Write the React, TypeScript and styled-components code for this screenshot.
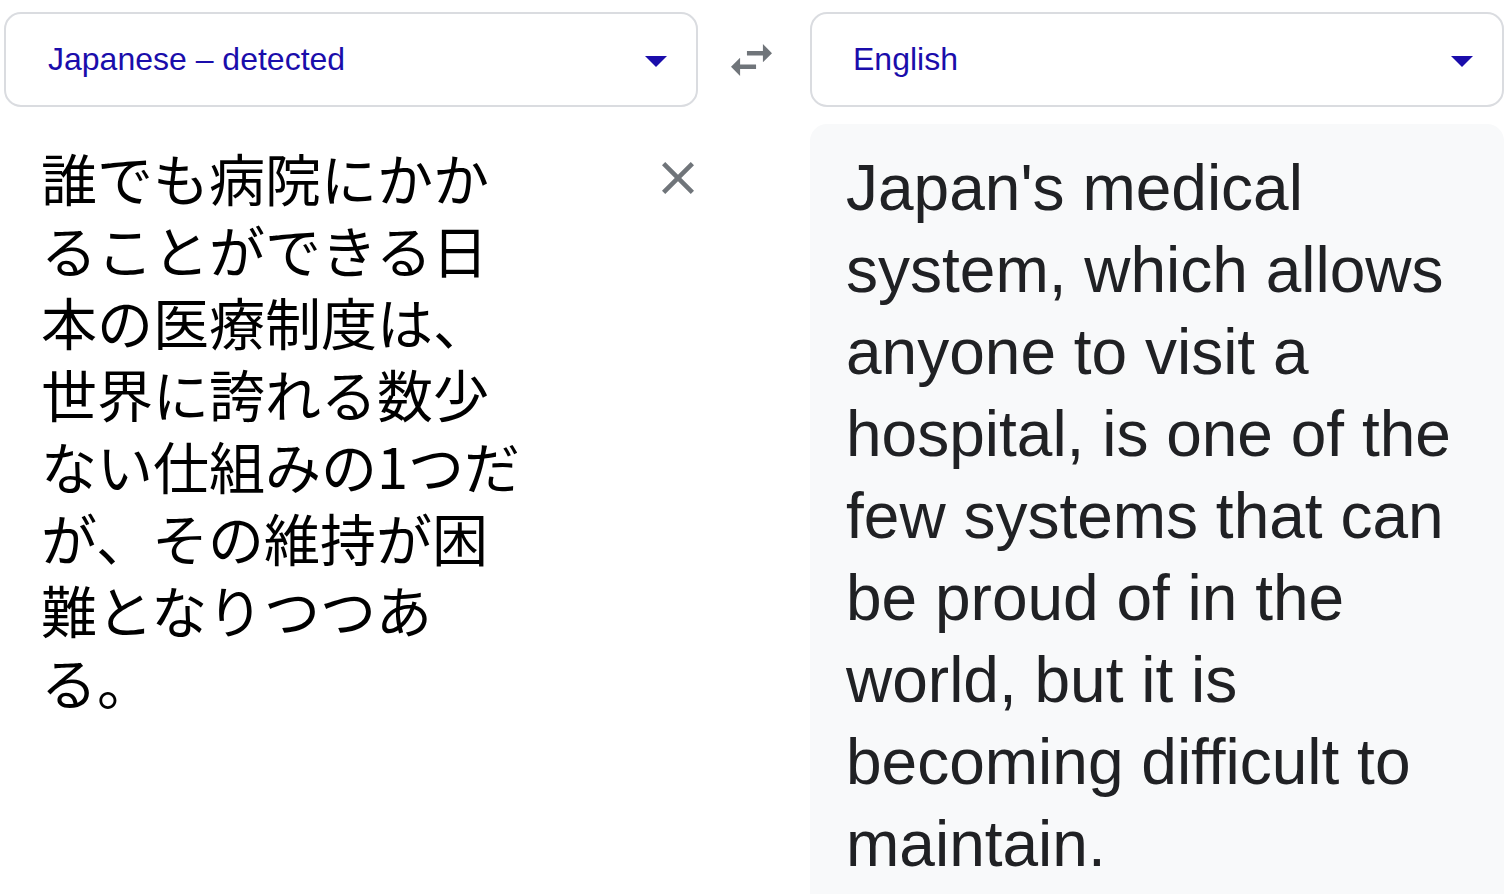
import React from "react";
import styled, { createGlobalStyle } from "styled-components";

const GlobalStyle = createGlobalStyle`
  html, body {
    margin: 0;
    padding: 0;
    background: #ffffff;
    overflow: hidden;
  }
  body {
    font-family: "Liberation Sans", Arial, sans-serif;
  }
`;

const Page = styled.div`
  display: grid;
  grid-template-columns: 694px 112px 694px;
  grid-template-rows: 95px auto;
  row-gap: 17px;
  padding: 12px 4px 0 4px;
  width: 1500px;
`;

const LangSelect = styled.div<{ $pad: number }>`
  box-sizing: border-box;
  height: 95px;
  border: 2px solid #dadce0;
  border-radius: 17px;
  display: flex;
  align-items: center;
  justify-content: space-between;
  padding: 0 29px 0 ${(p) => p.$pad}px;
  color: #1a0dab;
  font-family: "Liberation Sans", Arial, sans-serif;
  font-size: 32px;
  background: #fff;
`;

const LangLabel = styled.span`
  line-height: 1;
  padding-bottom: 2px;
`;

const Caret = styled.span`
  width: 0;
  height: 0;
  border-left: 11.5px solid transparent;
  border-right: 11.5px solid transparent;
  border-top: 11.5px solid #1a0dab;
  margin-top: 4px;
`;

const SwapCell = styled.div`
  display: flex;
  align-items: center;
  justify-content: center;
  padding-right: 5px;
`;

const IconSvg = styled.svg`
  fill: #70757a;
  display: block;
`;

const InputArea = styled.div`
  display: flex;
  justify-content: space-between;
  align-items: flex-start;
  padding: 17px 0 0 37px;
`;

const SourceText = styled.div`
  width: 490px;
  font-family: "Noto Sans CJK JP", "Noto Sans JP", sans-serif;
  font-size: 56px;
  line-height: 72px;
  color: #000;
  line-break: strict;
`;

const ClearButton = styled.div`
  margin-top: 21px;
  margin-right: 4px;
`;

const Spacer = styled.div``;

const OutputPanel = styled.div`
  background: #f8f9fa;
  border-radius: 17px 17px 0 0;
  padding: 23px 34px 60px 36px;
  min-height: 800px;
`;

const TargetText = styled.div`
  font-family: "Liberation Sans", Arial, sans-serif;
  font-size: 64px;
  line-height: 82px;
  color: #202124;
`;

const SwapIcon = () => (
  <IconSvg width="41" height="32" viewBox="3 5 18 14">
    <path d="M6.99 11L3 15l3.99 4v-3H14v-2H6.99v-3zM21 9l-3.99-4v3H10v2h7.01v3L21 9z" />
  </IconSvg>
);

const CloseIcon = () => (
  <IconSvg width="32" height="32" viewBox="5 5 14 14">
    <path d="M19 6.41L17.59 5 12 10.59 6.41 5 5 6.41 10.59 12 5 17.59 6.41 19 12 13.41 17.59 19 19 17.59 13.41 12z" />
  </IconSvg>
);

export default function App() {
  return (
    <>
      <GlobalStyle />
      <Page>
        <LangSelect $pad={42}>
          <LangLabel>Japanese – detected</LangLabel>
          <Caret />
        </LangSelect>
        <SwapCell>
          <SwapIcon />
        </SwapCell>
        <LangSelect $pad={41}>
          <LangLabel>English</LangLabel>
          <Caret />
        </LangSelect>

        <InputArea>
          <SourceText lang="ja">
            誰でも病院にかかることができる日本の医療制度は、世界に誇れる数少ない仕組みの1つだが、その維持が困難となりつつある。
          </SourceText>
          <ClearButton>
            <CloseIcon />
          </ClearButton>
        </InputArea>
        <Spacer />
        <OutputPanel>
          <TargetText>
            Japan's medical system, which allows anyone to visit a hospital, is one of the few systems that can be proud of in the world, but it is becoming difficult to maintain.
          </TargetText>
        </OutputPanel>
      </Page>
    </>
  );
}
